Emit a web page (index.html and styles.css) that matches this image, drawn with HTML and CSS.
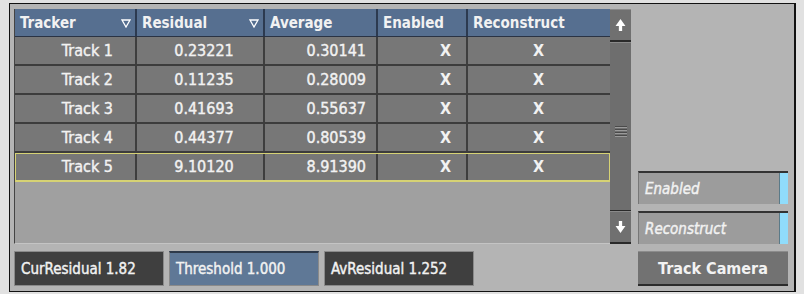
FILE: index.html
```html
<!DOCTYPE html>
<html lang="en">
<head>
  <meta charset="UTF-8" />
  <title>Tracker</title>
  <link rel="stylesheet" href="styles.css">
</head>
<body>
  <div class="frame">
    <div class="list-area">
      <div class="table">
        <div class="row head">
          <div class="cell c1">Tracker <svg class="sort" viewBox="0 0 10 10"><path d="M1 2 H9 L5 9 Z" fill="none" stroke="#fff" stroke-width="1.3"/></svg></div>
          <div class="cell c2">Residual <svg class="sort" viewBox="0 0 10 10"><path d="M1 2 H9 L5 9 Z" fill="none" stroke="#fff" stroke-width="1.3"/></svg></div>
          <div class="cell c3">Average</div>
          <div class="cell c4">Enabled</div>
          <div class="cell c5">Reconstruct</div>
        </div>
        <div class="row">
          <div class="cell c1">Track 1</div><div class="cell c2">0.23221</div><div class="cell c3">0.30141</div><div class="cell c4">X</div><div class="cell c5">X</div>
        </div>
        <div class="row">
          <div class="cell c1">Track 2</div><div class="cell c2">0.11235</div><div class="cell c3">0.28009</div><div class="cell c4">X</div><div class="cell c5">X</div>
        </div>
        <div class="row">
          <div class="cell c1">Track 3</div><div class="cell c2">0.41693</div><div class="cell c3">0.55637</div><div class="cell c4">X</div><div class="cell c5">X</div>
        </div>
        <div class="row">
          <div class="cell c1">Track 4</div><div class="cell c2">0.44377</div><div class="cell c3">0.80539</div><div class="cell c4">X</div><div class="cell c5">X</div>
        </div>
        <div class="row selected">
          <div class="cell c1">Track 5</div><div class="cell c2">9.10120</div><div class="cell c3">8.91390</div><div class="cell c4">X</div><div class="cell c5">X</div>
        </div>
      </div>
      <div class="scrollbar">
        <div class="scroll-btn">
          <svg viewBox="0 0 10 12"><path d="M5 0.5 L9.5 7 H6.5 V11.5 H3.5 V7 H0.5 Z" fill="#fff"/></svg>
        </div>
        <div class="scroll-track">
          <div class="grip"></div>
        </div>
        <div class="scroll-btn">
          <svg viewBox="0 0 10 12"><path d="M5 11.5 L9.5 5 H6.5 V0.5 H3.5 V5 H0.5 Z" fill="#fff"/></svg>
        </div>
      </div>
    </div>

    <div class="toggles">
      <div class="toggle">Enabled<span class="led"></span></div>
      <div class="toggle">Reconstruct<span class="led"></span></div>
    </div>

    <div class="fields">
      <div class="field">CurResidual 1.82</div>
      <div class="field active">Threshold 1.000</div>
      <div class="field">AvResidual 1.252</div>
    </div>

    <div class="action">Track Camera</div>
  </div>
</body>
</html>
```

FILE: styles.css
```css
body {
  margin: 0;
  background: #e1e1e1;
  font-family: "DejaVu Sans Condensed", "DejaVu Sans", sans-serif;
  color: #f2f2f2;
  -webkit-text-stroke: 0.4px #f2f2f2;
  padding: 3px 0 0 9px;
}

.frame {
  width: 774px;
  height: 278px;
  background: #b4b4b4;
  border: 1px solid #111;
  border-right-width: 2px;
  padding: 5px 6px 4px 4px;
  display: grid;
  grid-template-columns: 617px 150px;
  grid-template-rows: 235px 35px;
  column-gap: 7px;
  row-gap: 7px;
}

.list-area {
  display: flex;
}

.table {
  width: 596px;
  background: #a0a0a0;
  border-left: 1px solid #444;
  border-bottom: 1px solid #c4c4c4;
  box-sizing: border-box;
}

.row {
  display: grid;
  grid-template-columns: 122px 128px 113px 90px 141px;
  height: 29px;
  background: #777;
  border-bottom: 2px solid #3c3c3c;
  box-sizing: border-box;
  font-size: 16px;
}

.row.head {
  height: 28px;
  background: #566f90;
  border-bottom: 1px solid #2a3344;
  font-size: 15px;
  font-weight: bold;
  -webkit-text-stroke: 0;
}

.row.selected {
  outline: 1px solid #d6d274;
  outline-offset: -1px;
  border-bottom-color: #d6d274;
}

.cell {
  display: flex;
  align-items: center;
  border-right: 2px solid #3e3e3e;
  padding: 0 6px;
  box-sizing: border-box;
  white-space: nowrap;
}

.cell:last-child {
  border-right: none;
}

.head .cell {
  border-right-color: #2c3a50;
  justify-content: space-between;
  padding: 0 4px 0 5px;
}

.row:not(.head) .c1 { justify-content: flex-end; padding-right: 22px; }
.row:not(.head) .c2 { justify-content: center; padding-left: 14px; }
.row:not(.head) .c3 { justify-content: flex-end; padding-right: 10px; }
.row:not(.head) .c4 { justify-content: flex-end; padding-right: 15px; font-weight: bold; -webkit-text-stroke: 0; }
.row:not(.head) .c5 { justify-content: center; font-weight: bold; -webkit-text-stroke: 0; }

.sort {
  width: 10px;
  height: 10px;
}

.scrollbar {
  width: 21px;
  display: flex;
  flex-direction: column;
  background: #555;
}

.scroll-btn {
  height: 33px;
  background: #707070;
  border-top: 1px solid #8a8a8a;
  border-bottom: 2px solid #2a2a2a;
  display: flex;
  align-items: center;
  justify-content: center;
  box-sizing: border-box;
}

.scroll-btn svg {
  width: 11px;
  height: 14px;
}

.scroll-track {
  flex: 1;
  background: #6e6e6e;
  border-top: 1px solid #8a8a8a;
  border-bottom: 1px solid #2a2a2a;
  display: flex;
  align-items: center;
  justify-content: center;
}

.grip {
  width: 12px;
  height: 11px;
  margin-top: 10px;
  background: repeating-linear-gradient(#4a4a4a 0 1px, #9a9a9a 1px 2px, transparent 2px 3px);
}

.toggles {
  display: flex;
  flex-direction: column;
  justify-content: flex-end;
  gap: 7px;
}

.toggle {
  height: 33px;
  background: #9c9c9c;
  border-top: 2px solid #333;
  border-left: 1px solid #777;
  font-style: italic;
  font-size: 15px;
  display: flex;
  align-items: center;
  padding-left: 6px;
  position: relative;
  box-sizing: border-box;
}

.led {
  position: absolute;
  right: 0;
  top: 0;
  bottom: 0;
  width: 8px;
  background: #90dcfb;
  border-left: 1px solid #5a7a88;
}

.fields {
  display: flex;
  gap: 5px;
}

.field {
  width: 150px;
  background: #3f3f3f;
  border: 1px solid #8a8a8a;
  box-sizing: border-box;
  font-size: 15px;
  display: flex;
  align-items: center;
  padding-left: 6px;
}

.field.active {
  background: #5f7896;
  border: 1px solid #8a8a8a;
  border-top: 2px solid #2e3a4a;
}

.action {
  background: #727272;
  border-bottom: 2px solid #2c2c2c;
  border-top: 1px solid #8c8c8c;
  box-sizing: border-box;
  font-size: 16px;
  font-weight: bold;
  -webkit-text-stroke: 0;
  display: flex;
  align-items: center;
  justify-content: center;
}
```
